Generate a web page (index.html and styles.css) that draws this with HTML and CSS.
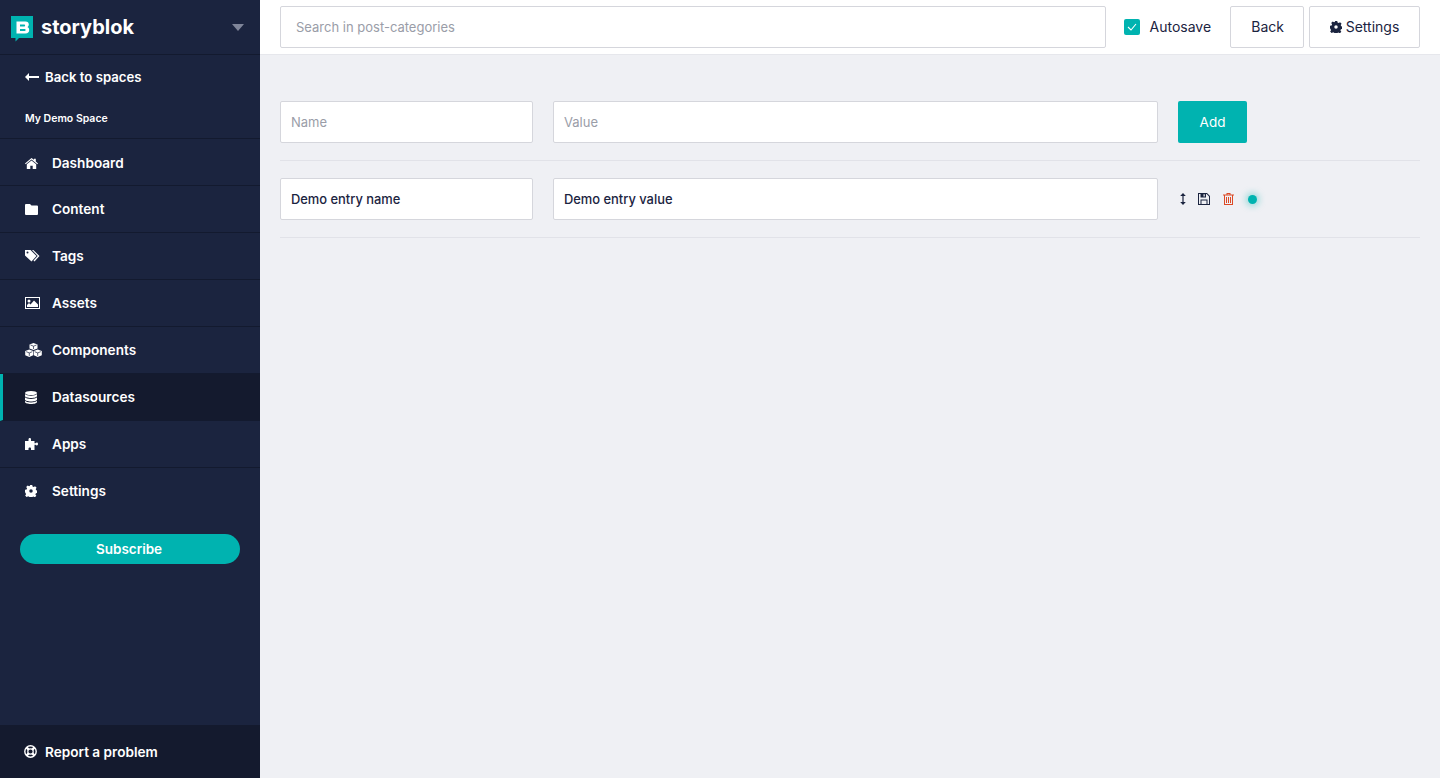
FILE: index.html
```html
<!DOCTYPE html>
<html lang="en">
<head>
<meta charset="utf-8">
<title>Datasources - Storyblok</title>
<link rel="stylesheet" href="styles.css">
</head>
<body>
<div class="app">
  <aside class="sidebar">
    <div class="brand">
      <svg class="logo" width="22" height="26" viewBox="0 0 22 26"><path fill="#00b3b0" d="M0 0h22v22H8l-3.500 3.500V22H0z"/><path fill="#fff" fill-rule="evenodd" d="M5.500 5.500h9c2.200 0 3.300 1.200 3.300 3 0 1.200-.6 2.100-1.500 2.600 1.200.5 1.900 1.500 1.900 2.900 0 2.100-1.400 3.500-3.700 3.500h-9zM9 8.500v2h4c.7 0 1.100-.4 1.100-1s-.4-1-1.100-1zM9 13v2h4.500c.7 0 1.100-.4 1.100-1s-.4-1-1.100-1z"/></svg>
      <span class="brand-name">storyblok</span>
      <span class="caret"></span>
    </div>
    <div class="space">
      <a class="back-link"><svg width="14" height="8" viewBox="0 0 14 8"><path fill="#fff" d="M4 0 0 4l4 4V5h10V3H4z"/></svg>Back to spaces</a>
      <div class="space-name">My Demo Space</div>
    </div>
    <nav class="nav">
      <a class="nav-item"><span class="ico"><svg width="13" height="11" viewBox="0 0 13 11"><path fill="#fff" d="M6.500 0 0 5.400l.7.800L6.500 1.500l5.800 4.700.7-.8-2.200-1.800V.8H9v1zM1.800 6.300V11h3.500V7.700h2.400V11h3.500V6.300L6.500 2.600z"/></svg></span>Dashboard</a>
      <a class="nav-item"><span class="ico"><svg width="13" height="11" viewBox="0 0 13 11"><path fill="#fff" d="M1 0h4l1.500 1.500H12a1 1 0 0 1 1 1V10a1 1 0 0 1-1 1H1a1 1 0 0 1-1-1V1a1 1 0 0 1 1-1z"/></svg></span>Content</a>
      <a class="nav-item"><span class="ico"><svg width="15" height="12" viewBox="0 0 15 12"><path fill="#fff" fill-rule="evenodd" d="M0 0h5.500l6 6-5 5.500-6.500-6zM2.500 1.500a1 1 0 1 0 0 2 1 1 0 0 0 0-2z"/><path fill="#fff" d="M7 0h1.300l6.200 6-5 5.500-1-.9L12.700 6z"/></svg></span>Tags</a>
      <a class="nav-item"><span class="ico"><svg width="15" height="12" viewBox="0 0 15 12"><path fill="#fff" fill-rule="evenodd" d="M0 0h15v12H0zm1 1v10h13V1zM2 10V8l2-2 1.500 1.500L9 3.500l4 4V10zM4 2.500a1.500 1.500 0 1 1 0 3 1.500 1.500 0 0 1 0-3z"/></svg></span>Assets</a>
      <a class="nav-item"><span class="ico"><svg width="17" height="14" viewBox="0 0 17 14"><path fill="#fff" d="M8.500 0 12.500 1.600V5.500L8.500 7 4.500 5.500V1.600zM4.300 6.500 8.200 8v4.200L4.300 14 .2 12.200V8zM12.700 6.500 16.800 8v4.200L12.700 14 8.800 12.200V8z"/><path stroke="#1b243f" stroke-width=".7" fill="none" d="M5.500 2 8.500 3.200 11.500 2M8.500 3.200V6M1.200 8.700l3.100 1.200 3-1.200M4.300 9.900v3M9.700 8.700l3 1.200 3.100-1.200M12.700 9.900v3"/></svg></span>Components</a>
      <a class="nav-item active"><span class="ico"><svg width="12" height="13" viewBox="0 0 12 13"><ellipse fill="#fff" cx="6" cy="2" rx="6" ry="2"/><path fill="#fff" d="M0 3v2c0 1.100 2.700 2 6 2s6-.9 6-2V3c-1 1.100-3.300 1.700-6 1.700S1 4.100 0 3zM0 6.300v2.300c0 1.100 2.700 2 6 2s6-.9 6-2V6.300C11 7.400 8.700 8 6 8S1 7.400 0 6.300zM0 9.700V11c0 1.100 2.700 2 6 2s6-.9 6-2V9.700c-1 1.100-3.300 1.700-6 1.700s-5-.6-6-1.700z"/></svg></span>Datasources</a>
      <a class="nav-item"><span class="ico"><svg width="13" height="12" viewBox="0 0 13 12"><path fill="#fff" d="M0 3h3.500V1.500C3.500.5 4 0 4.800 0s1.200.5 1.200 1.500V3h3.500v2.300h1c.4-.5.9-.7 1.400-.7.700 0 1.100.6 1.100 1.400s-.4 1.400-1.100 1.400c-.5 0-1-.2-1.400-.7h-1V12H6v-1.300c0-.8-.4-1.200-1.200-1.200s-1.300.4-1.300 1.200V12H0z"/></svg></span>Apps</a>
      <a class="nav-item"><span class="ico"><svg width="12" height="12" viewBox="0 0 24 24"><path fill="#fff" fill-rule="evenodd" d="M9.500 0h5l.6 3.200 2.300 1 2.700-1.900 3.100 3.100-1.800 2.700 1 2.300 2.600.6v5l-3.200.6-1 2.300 1.900 2.700-3.100 3.100-2.700-1.800-2.300 1-.6 2.600h-5l-.6-3.200-2.300-1-2.700 1.900-3.100-3.100 1.800-2.700-1-2.300L0 14.500v-5l3.200-.6 1-2.300L2.300 3.900l3.100-3.100 2.700 1.800 2.300-1zM12 8.500a3.500 3.500 0 1 0 0 7 3.500 3.500 0 0 0 0-7z"/></svg></span>Settings</a>
    </nav>
    <a class="subscribe">Subscribe</a>
    <a class="report"><svg width="13" height="13" viewBox="0 0 13 13"><circle cx="6.500" cy="6.500" r="5.700" fill="none" stroke="#fff" stroke-width="1.400"/><circle cx="6.500" cy="6.500" r="2.700" fill="none" stroke="#fff" stroke-width="1.200"/><path stroke="#fff" stroke-width="2.400" d="m2.400 2.400 2.300 2.300M10.600 2.400 8.300 4.700M2.400 10.600l2.300-2.300M10.600 10.600 8.300 8.300"/></svg>Report a problem</a>
  </aside>
  <main class="main">
    <header class="topbar">
      <input class="field search" placeholder="Search in post-categories">
      <label class="autosave"><span class="check"><svg width="10" height="8" viewBox="0 0 10 8"><path fill="none" stroke="#fff" stroke-width="1.100" d="m1 4 3 3 5-6"/></svg></span>Autosave</label>
      <button class="btn back">Back</button>
      <button class="btn settings"><svg width="12" height="12" viewBox="0 0 24 24"><path fill="#1b243f" fill-rule="evenodd" d="M9.500 0h5l.6 3.200 2.300 1 2.700-1.900 3.100 3.100-1.800 2.700 1 2.300 2.600.6v5l-3.200.6-1 2.300 1.900 2.700-3.100 3.100-2.700-1.800-2.300 1-.6 2.600h-5l-.6-3.200-2.300-1-2.700 1.900-3.100-3.100 1.800-2.700-1-2.300L0 14.500v-5l3.200-.6 1-2.300L2.300 3.900l3.100-3.100 2.700 1.800 2.300-1zM12 8.500a3.500 3.500 0 1 0 0 7 3.500 3.500 0 0 0 0-7z"/></svg>Settings</button>
    </header>
    <section class="content">
      <div class="row">
        <input class="field name" placeholder="Name">
        <input class="field value" placeholder="Value">
        <button class="add">Add</button>
      </div>
      <div class="row">
        <input class="field name filled" value="Demo entry name">
        <input class="field value filled" value="Demo entry value">
        <div class="actions">
          <svg width="6" height="12" viewBox="0 0 6 12"><path fill="#1b243f" d="M3 0 5.800 3H3.600v6h2.200L3 12 .2 9h2.200V3H.2z"/></svg>
          <svg class="save" width="12" height="12" viewBox="0 0 12 12"><path fill="#1b243f" fill-rule="evenodd" d="M0 0h9l3 3v9H0zm1 1v10h1.500V6.500h7V11H11V3.400L8.600 1H8v3.500H2.500V1zM3.500 7.500V11h5V7.500zM5.500 1.200V3.500h1.300V1.200z"/></svg>
          <svg class="trash" width="11" height="12" viewBox="0 0 11 12"><path fill="#dc4a26" fill-rule="evenodd" d="M3.500 1.500V0h4v1.500H11v1h-1V12H1V2.500H0v-1zM4.500 1v.5h2V1zM2 2.500V11h7V2.500zM3 4h1v6H3zM5 4h1v6H5zM7 4h1v6H7z"/></svg>
          <span class="dot"></span>
        </div>
      </div>
    </section>
  </main>
</div>
</body>
</html>
```

FILE: styles.css
```css
* { box-sizing: border-box; }
html, body { margin: 0; height: 100%; }
body { font-family: Inter, "Liberation Sans", sans-serif; color: #1b243f; overflow: hidden; }
.app { display: flex; height: 778px; }

.sidebar { width: 260px; flex: none; background: #1b243f; color: #fff; display: flex; flex-direction: column; font-size: 14px; font-weight: 600; }
.brand { height: 55px; display: flex; align-items: center; padding: 0 16px 0 11px; border-bottom: 1px solid #131a2f; }
.logo { margin-top: 4px; }
.brand-name { font-size: 20px; font-weight: 700; margin-left: 8px; }
.caret { margin-left: auto; border: 6px solid transparent; border-top: 7px solid #7f8599; border-bottom: 0; }

.space { height: 84px; padding: 13px 25px 0; border-bottom: 1px solid #131a2f; }
.back-link { display: flex; align-items: center; gap: 6px; height: 17px; font-size: 13.200px; }
.space-name { margin-top: 27px; font-size: 10.500px; line-height: 13px; }

.nav-item { display: flex; align-items: center; height: 47px; padding: 0 0 0 25px; border-bottom: 1px solid #131a2f; font-size: 13.600px; }
.nav-item:first-child { padding-top: 2px; }
.ico { width: 27px; display: flex; align-items: center; }
.nav-item.active { background: #141a2e; border-left: 3px solid #00b3b0; padding-left: 22px; }
.nav-item:last-child { border-bottom: 0; padding-bottom: 2px; }

.subscribe { margin: 19px 20px 0; height: 30px; padding-right: 2px; border-radius: 15px; background: #00b3b0; display: flex; align-items: center; justify-content: center; font-size: 13.500px; }
.report { margin-top: auto; height: 53px; background: #141a2e; display: flex; align-items: center; gap: 8px; padding-left: 24px; font-size: 13.600px; }

.main { flex: 1; min-width: 0; background: #eff0f4; }
.topbar { height: 55px; background: #fff; border-bottom: 1px solid #e6e7ec; display: flex; align-items: center; padding: 0 20px 1px; }
.field { height: 42px; border: 1px solid #d5d6dc; border-radius: 2px; background: #fff; font: 400 13px Inter, "Liberation Sans", sans-serif; color: #1b243f; padding: 0 10px; outline: 0; }
.field::placeholder { color: #9a9da8; opacity: 1; }
.search { width: 826px; padding-left: 15px; }
.autosave { display: flex; align-items: center; margin-left: 18px; font-size: 14px; }
.check { width: 16px; height: 16px; margin-right: 10px; border-radius: 2px; background: #00b3b0; display: flex; align-items: center; justify-content: center; }
.btn { height: 42px; border: 1px solid #d5d6dc; border-radius: 2px; background: #fff; font: 400 14px Inter, "Liberation Sans", sans-serif; color: #1b243f; display: flex; align-items: center; justify-content: center; padding: 0; }
.back { width: 74px; margin-left: 19px; padding-left: 1px; }
.settings { width: 111px; margin-left: 5px; gap: 4px; }

.content { padding: 46px 20px 0; }
.row { display: flex; align-items: center; padding-bottom: 17px; margin-bottom: 17px; border-bottom: 1px solid #e1e2e8; }
.name { width: 253px; }
.value { width: 605px; margin-left: 20px; }
.filled { font-size: 12.900px; font-weight: 500; }
.add { width: 69px; height: 42px; margin-left: 20px; border: 0; border-radius: 2px; background: #00b3b0; color: #fff; font: 400 13.500px Inter, "Liberation Sans", sans-serif; padding: 0; }
.actions { display: flex; align-items: center; margin-left: 22px; }
.save { margin-left: 12px; }
.trash { margin-left: 13px; }
.dot { width: 9px; height: 9px; margin-left: 14px; border-radius: 50%; background: #00b3b0; box-shadow: 0 0 7px 2px rgba(0, 179, 176, .4); }
```
